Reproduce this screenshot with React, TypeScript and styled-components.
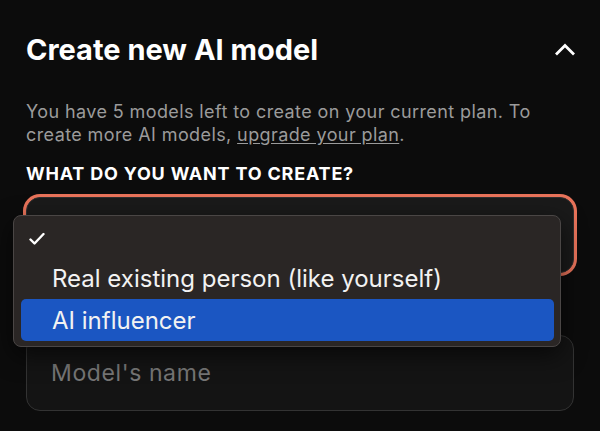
import React from "react";
import styled, { createGlobalStyle } from "styled-components";

const GlobalStyle = createGlobalStyle`
  html, body {
    margin: 0;
    padding: 0;
    background: #0c0c0c;
  }
  body {
    font-family: Inter, "Noto Sans", sans-serif;
    color: #fff;
    -webkit-font-smoothing: antialiased;
  }
`;

const options = ["", "Real existing person (like yourself)", "AI influencer"];

export default function App() {
  const selected = 0;
  const highlighted = 2;

  return (
    <>
      <GlobalStyle />
      <Panel>
        <Header>
          <Title>Create new AI model</Title>
          <CollapseButton aria-label="Collapse">
            <svg width="22" height="14" viewBox="0 0 22 14" fill="none">
              <polyline
                points="2,11.5 11,2.5 20,11.5"
                stroke="#fff"
                strokeWidth="2.8"
                strokeLinecap="butt"
                strokeLinejoin="miter"
              />
            </svg>
          </CollapseButton>
        </Header>

        <Intro>
          You have 5 models left to create on your current plan. To create more AI models,{" "}
          <a href="#">upgrade your plan</a>.
        </Intro>

        <FieldLabel>What do you want to create?</FieldLabel>

        <SelectWrap>
          <SelectField $focused />
          <Menu>
            {options.map((option, i) => (
              <MenuItem key={i} $active={i === highlighted} $empty={option === ""}>
                {i === selected && (
                  <Check width="16" height="13" viewBox="0 0 16 13" fill="none">
                    <polyline
                      points="1.5,7 5.5,11 14.5,1.5"
                      stroke="#fff"
                      strokeWidth="2.4"
                      strokeLinecap="round"
                      strokeLinejoin="round"
                    />
                  </Check>
                )}
                {option}
              </MenuItem>
            ))}
          </Menu>
        </SelectWrap>

        <NameInput placeholder="Model's name" />
      </Panel>
    </>
  );
}

const Panel = styled.div`
  padding: 32px 26px 20px;
`;

const Header = styled.div`
  display: flex;
  justify-content: space-between;
  align-items: center;
`;

const Title = styled.h2`
  margin: 0;
  font-size: 29px;
  line-height: 35px;
  font-weight: 700;
  letter-spacing: 0;
`;

const CollapseButton = styled.button`
  display: flex;
  align-items: center;
  justify-content: center;
  padding: 0;
  margin-right: -2px;
  border: 0;
  background: none;
  cursor: pointer;
`;

const Intro = styled.p`
  margin: 33px 0 0;
  font-size: 18px;
  line-height: 23px;
  letter-spacing: 0.4px;
  color: #9b9b9b;

  a {
    color: inherit;
    text-decoration: underline;
    text-underline-offset: 2px;
  }
`;

const FieldLabel = styled.div`
  margin-top: 17px;
  font-size: 18px;
  line-height: 22px;
  font-weight: 700;
  letter-spacing: 0.8px;
  text-transform: uppercase;
`;

const SelectWrap = styled.div`
  position: relative;
  margin-top: 12px;
`;

const SelectField = styled.div<{ $focused?: boolean }>`
  height: 76px;
  box-sizing: border-box;
  border-radius: 14px;
  border: 1px solid #2e2e2e;
  background: #1a1a1a;
  box-shadow: ${(p) => (p.$focused ? "0 0 0 3px #e8735a" : "none")};
`;

const Menu = styled.div`
  position: absolute;
  left: -13px;
  top: 18px;
  width: 548px;
  box-sizing: border-box;
  padding: 4px 6px 5px 7px;
  border: 1px solid #4a4645;
  border-radius: 8px;
  background: #2a2625;
  box-shadow: 0 8px 24px rgba(0, 0, 0, 0.6);
  z-index: 2;
`;

const MenuItem = styled.div<{ $active?: boolean; $empty?: boolean }>`
  position: relative;
  display: flex;
  align-items: center;
  height: ${(p) => (p.$empty ? "37px" : "42px")};
  padding-left: 31px;
  border-radius: 5px;
  font-size: 24px;
  color: #f2f2f2;
  background: ${(p) => (p.$active ? "#1b56c2" : "transparent")};
`;

const Check = styled.svg`
  position: absolute;
  left: 8px;
  top: 50%;
  transform: translateY(-50%);
`;

const NameInput = styled.input`
  display: block;
  width: 100%;
  height: 76px;
  box-sizing: border-box;
  margin-top: 62px;
  padding: 0 24px;
  border-radius: 14px;
  border: 1px solid #333;
  background: #141414;
  font-family: Inter, "Noto Sans", sans-serif;
  font-size: 23px;
  letter-spacing: 0.6px;
  color: #fff;
  outline: none;

  &::placeholder {
    color: #767676;
  }
`;
